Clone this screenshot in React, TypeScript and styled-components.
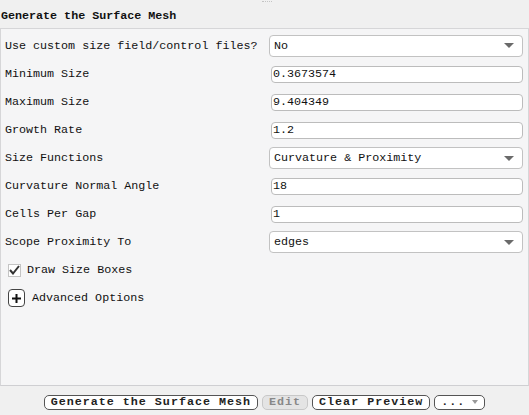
import React from "react"
import styled, { createGlobalStyle } from "styled-components"

const GlobalStyle = createGlobalStyle`
  html, body {
    margin: 0;
    padding: 0;
    background: #f0f0f0;
  }
  * {
    box-sizing: border-box;
  }
`

const mono = `"Liberation Mono", "DejaVu Sans Mono", monospace`

const Page = styled.div`
  width: 529px;
  height: 415px;
  display: flex;
  flex-direction: column;
  background: #f0f0f0;
  font-family: ${mono};
  font-size: 11.7px;
  color: #111;
  overflow: hidden;
`

const Header = styled.div`
  position: relative;
  height: 28px;
  display: flex;
  align-items: center;
  padding: 4px 0 0 1px;
`

// little drag grip at the top edge
const Grip = styled.span`
  position: absolute;
  top: 1px;
  left: 262px;
  width: 10px;
  border-top: 1px dotted #c4c4c4;
`

const Title = styled.div`
  font-weight: bold;
  font-size: 11.7px;
  color: #111;
`

const Panel = styled.div`
  flex: 1;
  background: #f5f5f6;
  border: 1px solid #d6d6d8;
  border-bottom-color: #cfcfd2;
  display: grid;
  grid-template-columns: 264px 1fr;
  grid-template-rows: 29px;
  grid-auto-rows: 28px;
  align-content: start;
  padding: 2px 5px 0 4px;
`

const Label = styled.div`
  display: flex;
  align-items: center;
  white-space: nowrap;
`

const Cell = styled.div<{ $inset?: number }>`
  display: flex;
  align-items: center;
  padding-left: ${(p) => p.$inset ?? 0}px;
`

const TextField = styled.div`
  width: 100%;
  height: 17px;
  background: #fff;
  border: 1px solid #bcbcbc;
  border-radius: 4px;
  display: flex;
  align-items: center;
  padding-left: 1px;
`

const Select = styled.div`
  width: 100%;
  height: 22px;
  background: #fff;
  border: 1px solid #c2c2c2;
  border-radius: 4px;
  display: flex;
  align-items: center;
  justify-content: space-between;
  padding: 0 8px 0 4px;
`

const Arrow = styled.span`
  width: 0;
  height: 0;
  border-left: 5px solid transparent;
  border-right: 5px solid transparent;
  border-top: 5px solid #6a6a6a;
`

const Wide = styled.div`
  grid-column: 1 / 3;
  display: flex;
  align-items: center;
  gap: 6px;
  padding-left: 3px;
`

const CheckBox = styled.span`
  width: 13px;
  height: 13px;
  border: 1px solid #c4c4c4;
  background: #fff;
  display: flex;
  align-items: center;
  justify-content: center;
`

const PlusBox = styled.span`
  width: 17px;
  height: 18px;
  border: 1px solid #444;
  border-radius: 4px;
  background: #fff;
  display: flex;
  align-items: center;
  justify-content: center;
  margin-right: 1px;
`

const Footer = styled.div`
  height: 29px;
  display: flex;
  justify-content: center;
  align-items: center;
  gap: 4px;
  padding: 3px 0 0 0;
`

const Button = styled.div<{ $disabled?: boolean }>`
  height: 15px;
  display: flex;
  align-items: center;
  gap: 7px;
  padding: 0 6px;
  font-weight: bold;
  border: 1px solid ${(p) => (p.$disabled ? "#c8c8c8" : "#555")};
  border-radius: 5px;
  background: ${(p) => (p.$disabled ? "#e4e4e4" : "#fff")};
  color: ${(p) => (p.$disabled ? "#888" : "#222")};
  letter-spacing: 1px;
`

const SmallArrow = styled.span`
  width: 0;
  height: 0;
  border-left: 3px solid transparent;
  border-right: 3px solid transparent;
  border-top: 4px solid #999;
`

type Row = { label: string; kind: "text" | "select"; value: string }

const rows: Row[] = [
  { label: "Use custom size field/control files?", kind: "select", value: "No" },
  { label: "Minimum Size", kind: "text", value: "0.3673574" },
  { label: "Maximum Size", kind: "text", value: "9.404349" },
  { label: "Growth Rate", kind: "text", value: "1.2" },
  { label: "Size Functions", kind: "select", value: "Curvature & Proximity" },
  { label: "Curvature Normal Angle", kind: "text", value: "18" },
  { label: "Cells Per Gap", kind: "text", value: "1" },
  { label: "Scope Proximity To", kind: "select", value: "edges" },
]

export default function App() {
  return (
    <Page>
      <GlobalStyle />
      <Header>
        <Grip />
        <Title>Generate the Surface Mesh</Title>
      </Header>
      <Panel>
        {rows.map((r) => (
          <React.Fragment key={r.label}>
            <Label>{r.label}</Label>
            {r.kind === "select" ? (
              <Cell>
                <Select>
                  <span>{r.value}</span>
                  <Arrow />
                </Select>
              </Cell>
            ) : (
              <Cell $inset={2}>
                <TextField>{r.value}</TextField>
              </Cell>
            )}
          </React.Fragment>
        ))}
        <Wide>
          <CheckBox>
            <svg width="11" height="10" viewBox="0 0 11 10">
              <path d="M1 5 L4 8.5 L10 1" fill="none" stroke="#333" strokeWidth="2" />
            </svg>
          </CheckBox>
          <span>Draw Size Boxes</span>
        </Wide>
        <Wide>
          <PlusBox>
            <svg width="11" height="11" viewBox="0 0 11 11">
              <path d="M5.5 1 V10 M1 5.5 H10" stroke="#111" strokeWidth="2" />
            </svg>
          </PlusBox>
          <span>Advanced Options</span>
        </Wide>
      </Panel>
      <Footer>
        <Button>Generate the Surface Mesh</Button>
        <Button $disabled>Edit</Button>
        <Button>Clear Preview</Button>
        <Button>
          <span>...</span>
          <SmallArrow />
        </Button>
      </Footer>
    </Page>
  )
}
